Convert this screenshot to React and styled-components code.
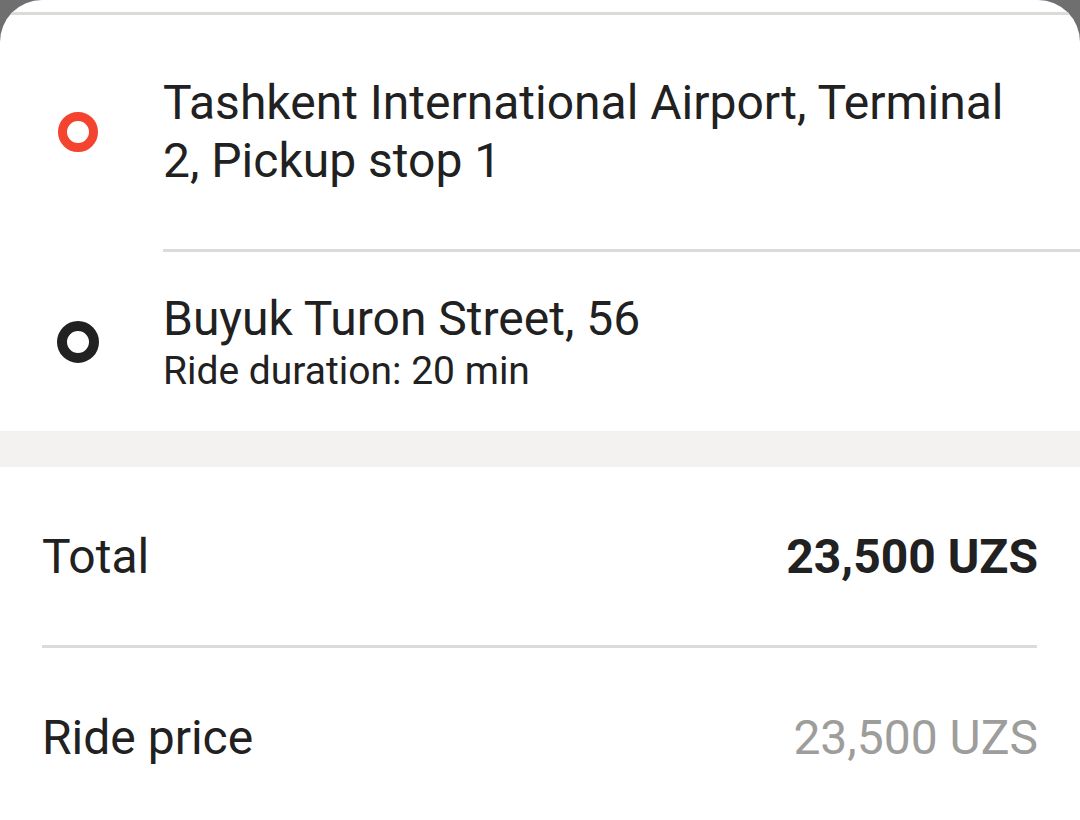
import React from "react";
import styled, { createGlobalStyle } from "styled-components";

const GlobalStyle = createGlobalStyle`
  html, body {
    margin: 0;
    padding: 0;
    background: #6f6f6f;
  }
  body {
    font-family: Roboto, "Noto Sans", Arial, sans-serif;
    -webkit-font-smoothing: antialiased;
  }
`;

// Bottom sheet
const Sheet = styled.div`
  width: 1080px;
  height: 820px;
  background: #fff;
  border-radius: 42px 42px 0 0;
  overflow: hidden;
  display: flex;
  flex-direction: column;
`;

const Divider = styled.div`
  height: 3px;
  background: #dcdbd7;
  margin-left: ${props => props.inset || 0}px;
  margin-right: ${props => props.insetRight || 0}px;
  margin-top: ${props => props.top || 0}px;
  flex-shrink: 0;
`;

const StopRow = styled.div`
  display: flex;
  align-items: center;
  height: ${props => props.h}px;
  flex-shrink: 0;
`;

const StopIconCell = styled.div`
  width: 163px;
  flex-shrink: 0;
  display: flex;
  justify-content: center;
  padding-right: 8px;
  box-sizing: border-box;
`;

const Ring = styled.span`
  width: ${props => props.size}px;
  height: ${props => props.size}px;
  box-sizing: border-box;
  border-radius: 50%;
  border: ${props => props.stroke}px solid ${props => props.color};
`;

const StopText = styled.div`
  display: flex;
  flex-direction: column;
  color: #212121;
  padding-right: 50px;
`;

const StopTitle = styled.div`
  font-size: 48px;
  line-height: 58px;
`;

const StopSub = styled.div`
  font-size: 39px;
  line-height: 46px;
`;

const Band = styled.div`
  height: 36px;
  background: #f3f2f0;
  flex-shrink: 0;
`;

const PriceRow = styled.div`
  display: flex;
  justify-content: space-between;
  align-items: center;
  height: 178px;
  padding: 0 42px;
  font-size: 48px;
  color: #212121;
  flex-shrink: 0;
`;

const PriceValue = styled.span`
  font-weight: ${props => (props.bold ? 700 : 400)};
  color: ${props => (props.muted ? "#9d9d9b" : "#212121")};
`;

const App = () => {
  return (
    <>
      <GlobalStyle />
      <Sheet>
        <Divider top={12} />
        <StopRow h={234}>
          <StopIconCell>
            <Ring color="#f4432f" size={40} stroke={9} />
          </StopIconCell>
          <StopText>
            <StopTitle>Tashkent International Airport, Terminal 2, Pickup stop 1</StopTitle>
          </StopText>
        </StopRow>
        <Divider inset={163} />
        <StopRow h={179}>
          <StopIconCell>
            <Ring color="#212121" size={42} stroke={10} />
          </StopIconCell>
          <StopText>
            <StopTitle>Buyuk Turon Street, 56</StopTitle>
            <StopSub>Ride duration: 20 min</StopSub>
          </StopText>
        </StopRow>
        <Band />
        <PriceRow>
          <span>Total</span>
          <PriceValue bold>23,500 UZS</PriceValue>
        </PriceRow>
        <Divider inset={42} insetRight={43} />
        <PriceRow>
          <span>Ride price</span>
          <PriceValue muted>23,500 UZS</PriceValue>
        </PriceRow>
      </Sheet>
    </>
  );
};

export default App;
